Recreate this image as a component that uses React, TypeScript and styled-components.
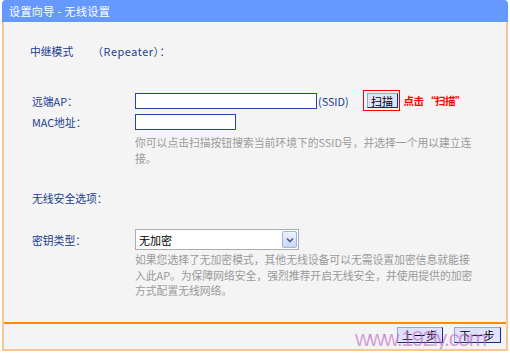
import React from "react";
import styled, { createGlobalStyle } from "styled-components";

const GlobalStyle = createGlobalStyle`
  html, body {
    margin: 0;
    padding: 0;
    background: #ffffff;
  }
  body {
    font-family: "Noto Sans CJK SC", "DejaVu Sans", sans-serif;
    font-size: 10.8px;
  }
`;

const Window = styled.div`
  margin-left: 2px;
  width: 506px;
  height: 351px;
  display: flex;
  flex-direction: column;
`;

const TitleBar = styled.div`
  height: 22px;
  flex: none;
  display: flex;
  align-items: center;
  padding-left: 7px;
  background: #6699ff;
  border-radius: 4px 4px 0 0;
  color: #ffffff;
  font-size: 11px;
  letter-spacing: 0.4px;
`;

const Body = styled.div`
  position: relative;
  flex: 1;
  display: flex;
  flex-direction: column;
  background: #f4f4f4;
  border: 2px solid #fbc590;
  border-top: none;
  overflow: hidden;
`;

const Content = styled.div`
  flex: 1;
  display: flex;
  flex-direction: column;
  padding: 21px 0 0 28px;
`;

const Row = styled.div<{ $top: number; $h: number }>`
  display: grid;
  grid-template-columns: 103px 1fr;
  align-items: center;
  height: ${(p) => p.$h}px;
  margin-top: ${(p) => p.$top}px;
`;

const Label = styled.div`
  color: #1a3c90;
  white-space: nowrap;
`;

const Heading = styled.div`
  display: flex;
  align-items: center;
  height: 16px;
  margin-left: -2px;
  color: #1a3c90;
  white-space: nowrap;
`;

const Mode = styled.span`
  margin-left: 19px;
  letter-spacing: 0.6px;
`;

const Field = styled.div`
  display: flex;
  align-items: center;
`;

const TextInput = styled.div<{ $w: number }>`
  width: ${(p) => p.$w}px;
  height: 16px;
  box-sizing: border-box;
  background: #ffffff;
  border: 1px solid #2246a6;
`;

const Unit = styled.span`
  margin-left: 1px;
  color: #1a3c90;
`;

const Highlight = styled.div`
  margin-left: 14px;
  padding: 2px 1px 2px 3px;
  border: 1px solid #ff0000;
  display: flex;
`;

const ScanButton = styled.div`
  width: 31px;
  height: 15px;
  box-sizing: border-box;
  display: flex;
  align-items: center;
  justify-content: center;
  background: #dfe2fa;
  border: 1px solid;
  border-color: #9aa4d8 #1c2a7a #1c2a7a #9aa4d8;
  color: #000000;
  font-size: 11px;
`;

const Hint = styled.span`
  margin-left: 4px;
  color: #ff0000;
  font-weight: bold;
  font-size: 10.5px;
  letter-spacing: -0.6px;
`;

const Help = styled.div<{ $top: number; $lh: number }>`
  margin: ${(p) => p.$top}px 0 0 103px;
  width: 342px;
  line-height: ${(p) => p.$lh}px;
  color: #9a9a9a;
`;

const Select = styled.div`
  width: 164px;
  height: 21px;
  box-sizing: border-box;
  display: flex;
  align-items: center;
  justify-content: space-between;
  padding: 0 1px 0 3px;
  background: #ffffff;
  border: 1px solid #a8adb4;
  color: #000000;
  font-size: 11px;
`;

const Arrow = styled.div`
  width: 15px;
  height: 17px;
  box-sizing: border-box;
  display: flex;
  align-items: center;
  justify-content: center;
  background: linear-gradient(#eef3fd, #c8d6f6);
  border: 1px solid #9db3e4;
  border-radius: 2px;
`;

const Footer = styled.div`
  height: 22px;
  flex: none;
  display: flex;
  justify-content: flex-end;
  align-items: flex-start;
  gap: 11px;
  padding: 3px 5px 0 0;
  border-top: 2px solid #ff8c00;
`;

const NavButton = styled.div<{ $w: number }>`
  width: ${(p) => p.$w}px;
  height: 16px;
  box-sizing: border-box;
  display: flex;
  align-items: center;
  justify-content: center;
  background: #dfe2fa;
  border: 1px solid;
  border-color: #9aa4d8 #1c2a7a #1c2a7a #9aa4d8;
  color: #000000;
  font-size: 11px;
  letter-spacing: 1px;
`;

const Watermark = styled.div`
  position: absolute;
  left: 351px;
  top: 306px;
  font-family: "Liberation Sans", Arial, sans-serif;
  font-size: 22px;
  line-height: 22px;
  letter-spacing: -1.6px;
  color: rgba(190, 100, 200, 0.6);
  pointer-events: none;
  white-space: nowrap;
`;

export default function App() {
  return (
    <>
      <GlobalStyle />
      <Window>
        <TitleBar>设置向导 - 无线设置</TitleBar>
        <Body>
          <Content>
            <Heading>
              中继模式<Mode>（Repeater）：</Mode>
            </Heading>

            <Row $top={31} $h={21}>
              <Label>远端AP：</Label>
              <Field>
                <TextInput $w={182} />
                <Unit>(SSID)</Unit>
                <Highlight>
                  <ScanButton>扫描</ScanButton>
                </Highlight>
                <Hint>点击 “扫描”</Hint>
              </Field>
            </Row>

            <Row $top={3} $h={16}>
              <Label>MAC地址：</Label>
              <TextInput $w={101} />
            </Row>

            <Help $top={4} $lh={16}>
              你可以点击扫描按钮搜索当前环境下的SSID号，并选择一个用以建立连接。
            </Help>

            <Row $top={24} $h={16}>
              <Label>无线安全选项：</Label>
            </Row>

            <Row $top={23} $h={21}>
              <Label>密钥类型：</Label>
              <Select>
                <span>无加密</span>
                <Arrow>
                  <svg width="8" height="6" viewBox="0 0 8 6">
                    <path d="M1 1.5 L4 4.5 L7 1.5" fill="none" stroke="#4d6185" strokeWidth="1.6" />
                  </svg>
                </Arrow>
              </Select>
            </Row>

            <Help $top={2} $lh={15.5}>
              如果您选择了无加密模式，其他无线设备可以无需设置加密信息就能接入此AP。为保障网络安全，强烈推荐开启无线安全，并使用提供的加密方式配置无线网络。
            </Help>
          </Content>

          <Footer>
            <NavButton $w={46}>上一步</NavButton>
            <NavButton $w={47}>下一步</NavButton>
          </Footer>

          <Watermark>www.192ly.com</Watermark>
        </Body>
      </Window>
    </>
  );
}
